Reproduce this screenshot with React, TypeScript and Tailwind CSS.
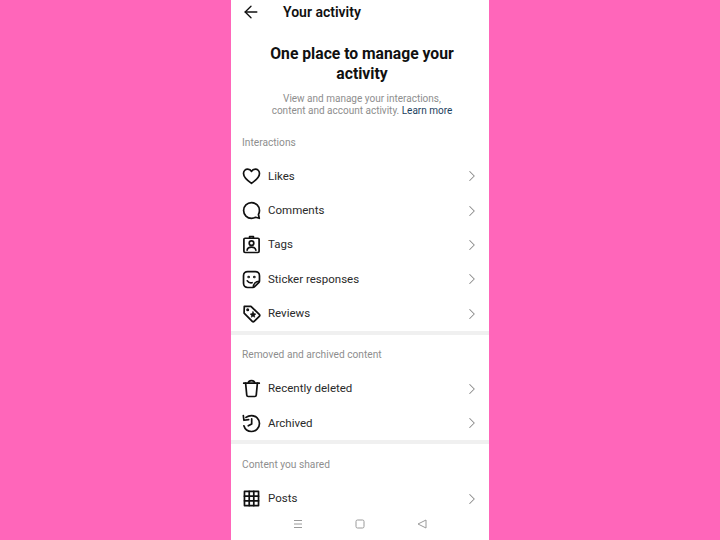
import React from 'react';
import { ArrowLeft, ChevronRight } from 'lucide-react';

// Outline icons, same stroke for all rows
const Heart = () => (
  <path d="M10 17.2 C6 14.4 1.6 11.2 1.6 6.8 C1.6 4 3.7 2.2 6 2.2 C7.7 2.2 9.2 3.1 10 4.7 C10.8 3.1 12.3 2.2 14 2.2 C16.3 2.2 18.4 4 18.4 6.8 C18.4 11.2 14 14.4 10 17.2 Z" />
);

const Comment = () => (
  <path d="M17.3 14.2 C18 13 18.4 11.6 18.4 10 C18.4 5.4 14.7 1.8 10 1.8 C5.4 1.8 1.7 5.4 1.7 10 C1.7 14.6 5.4 18.2 10 18.2 C11.6 18.2 13.1 17.8 14.3 17.1 L18.2 18.2 Z" />
);

const Tag = () => (
  <>
    <rect x="2" y="3.4" width="16" height="15" rx="1.2" />
    <path d="M8 3.4 L8 1.6 L12 1.6 L12 3.4" />
    <circle cx="10" cy="8.6" r="2.4" />
    <path d="M5.4 16 C5.8 13.6 7.6 12.8 10 12.8 C12.4 12.8 14.2 13.6 14.6 16" />
  </>
);

const Sticker = () => (
  <>
    <path d="M18.4 11.5 L18.4 6 C18.4 3.5 16.5 1.6 14 1.6 L6 1.6 C3.5 1.6 1.6 3.5 1.6 6 L1.6 14 C1.6 16.5 3.5 18.4 6 18.4 L11.5 18.4 C12.2 18.4 12.8 18.1 13.3 17.6 L17.6 13.3 C18.1 12.8 18.4 12.2 18.4 11.5 Z" />
    <path d="M5.6 11.4 C6.6 13 8.2 13.8 10.6 13.4" />
    <path d="M12 18 C12 14.6 14.4 12 18 12" />
    <circle cx="7" cy="7.4" r="0.5" fill="currentColor" />
    <circle cx="13" cy="7.4" r="0.5" fill="currentColor" />
  </>
);

const Review = () => (
  <>
    <path d="M2.4 2.6 L9.4 2.4 L18.2 11 C18.8 11.6 18.8 12.4 18.2 13 L12.8 18.2 C12.2 18.8 11.4 18.8 10.8 18.2 L2.2 9.6 Z" />
    <circle cx="6" cy="6" r="0.7" fill="currentColor" />
    <path d="M11.6 8 L12.6 10 L14.6 10.4 L13.2 12 L13.4 14 L11.6 13 L9.8 14 L10 12 L8.6 10.6 L10.6 10 Z" fill="currentColor" strokeWidth="0.6" />
  </>
);

const Trash = () => (
  <>
    <path d="M1.8 4.4 L18.2 4.4" />
    <path d="M6.6 4.4 C6.6 2.6 7.8 1.6 10 1.6 C12.2 1.6 13.4 2.6 13.4 4.4" />
    <path d="M3.8 4.4 L5 17 C5.1 17.9 5.7 18.4 6.5 18.4 L13.5 18.4 C14.3 18.4 14.9 17.9 15 17 L16.2 4.4" />
  </>
);

const Archive = () => (
  <>
    <path d="M4.2 3.6 C5.7 2.4 7.7 1.6 10 1.6 C14.6 1.6 18.4 5.4 18.4 10 C18.4 14.6 14.6 18.4 10 18.4 C6.2 18.4 3 15.8 2 12.4" />
    <path d="M1.4 1.6 L2 6.6 L7 6" />
    <path d="M10.2 5 L10.2 10.4 L6.6 12.4" />
  </>
);

const Grid = () => (
  <>
    <rect x="2.6" y="2.6" width="14.8" height="14.8" />
    <path d="M7.6 2.6 L7.6 17.4 M12.4 2.6 L12.4 17.4 M2.6 7.6 L17.4 7.6 M2.6 12.4 L17.4 12.4" />
  </>
);

const Row = ({ label, children }: { label: string; children: React.ReactNode }) => (
  <div className="flex h-[34.4px] items-center pl-[11px] pr-[8px]">
    <svg viewBox="0 0 20 20" fill="none" stroke="currentColor" strokeWidth="1.8" strokeLinejoin="round" strokeLinecap="round" className="h-[19px] w-[19px] shrink-0 text-[#111]">
      {children}
    </svg>
    <span className="ml-[7px] flex-1 text-[11.5px] text-[#2a2a2a]">{label}</span>
    <ChevronRight className="h-[18px] w-[18px] text-[#8a8a8a]" strokeWidth={1.4} />
  </div>
);

const SectionTitle = ({ children }: { children: React.ReactNode }) => (
  <div className="px-[11px] text-[10.2px] leading-[14px] text-[#8e8e8e]">{children}</div>
);

export default function App() {
  return (
    <div className="flex h-[540px] w-[720px] justify-center overflow-hidden bg-[#ff66ba] font-['Roboto',sans-serif]">
      <div className="flex h-full w-[258px] flex-col bg-white">
        <div className="flex h-[24px] items-center pl-[10px]">
          <ArrowLeft className="h-[20px] w-[20px] text-[#111]" strokeWidth={1.6} />
          <h1 className="ml-[22px] text-[14px] font-semibold text-[#111]">Your activity</h1>
        </div>

        <div className="mt-[19.5px] pl-[4px] text-center text-[15.7px] font-bold leading-[20px] text-[#111]">
          One place to manage your
          <br />
          activity
        </div>
        <p className="mt-[9px] pl-[4px] text-center text-[10px] leading-[12px] text-[#8e8e8e]">
          View and manage your interactions,
          <br />
          content and account activity. <span className="text-[#1c3f5e]">Learn more</span>
        </p>

        <div className="mt-[19px]">
          <SectionTitle>Interactions</SectionTitle>
        </div>
        <div className="mt-[9.5px]">
          <Row label="Likes"><Heart /></Row>
          <Row label="Comments"><Comment /></Row>
          <Row label="Tags"><Tag /></Row>
          <Row label="Sticker responses"><Sticker /></Row>
          <Row label="Reviews"><Review /></Row>
        </div>
        <div className="h-[4px] bg-[#f0f0f0]" />

        <div className="mt-[13.5px]">
          <SectionTitle>Removed and archived content</SectionTitle>
        </div>
        <div className="mt-[9.2px]">
          <Row label="Recently deleted"><Trash /></Row>
          <Row label="Archived"><Archive /></Row>
        </div>
        <div className="h-[4px] bg-[#f0f0f0]" />

        <div className="mt-[13.3px]">
          <SectionTitle>Content you shared</SectionTitle>
        </div>
        <div className="mt-[10px]">
          <Row label="Posts"><Grid /></Row>
        </div>

        <div className="flex h-[15px] items-center justify-center gap-[52px] text-[#9a9a9a]">
          <svg viewBox="0 0 10 10" className="h-[10px] w-[10px]" fill="none" stroke="currentColor" strokeWidth="1">
            <path d="M1 1.5 H9 M1 5 H9 M1 8.5 H9" />
          </svg>
          <svg viewBox="0 0 10 10" className="h-[10px] w-[10px]" fill="none" stroke="currentColor" strokeWidth="1">
            <rect x="1" y="1" width="8" height="8" rx="1.5" />
          </svg>
          <svg viewBox="0 0 10 10" className="h-[10px] w-[10px]" fill="none" stroke="currentColor" strokeWidth="1" strokeLinejoin="round">
            <path d="M1 5 L9 1 L9 9 Z" />
          </svg>
        </div>
      </div>
    </div>
  );
}
